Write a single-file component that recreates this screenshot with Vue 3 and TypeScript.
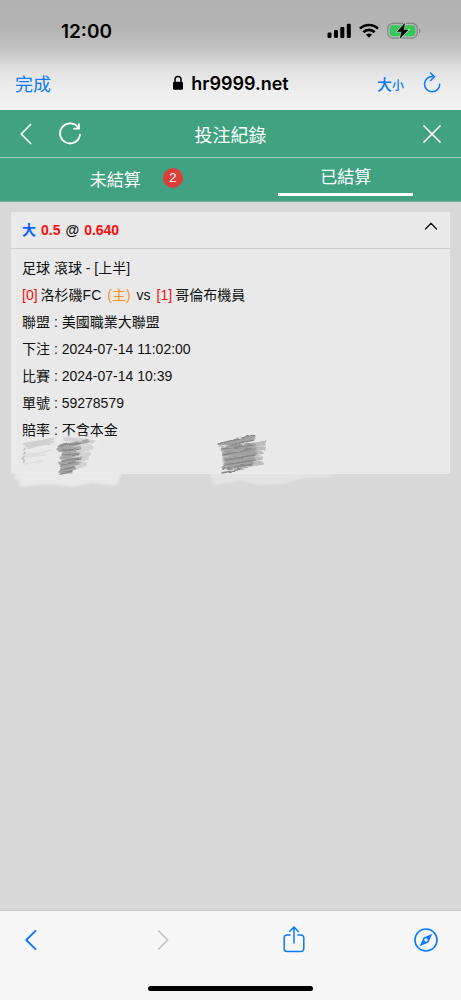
<script setup lang="ts">
import { ref } from 'vue'

interface Row {
  label: string
  value: string
}

const pending = 2
const activeTab = ref<'open' | 'settled'>('settled')
const expanded = ref(true)

const rows: Row[] = [
  { label: '聯盟', value: '美國職業大聯盟' },
  { label: '下注', value: '2024-07-14 11:02:00' },
  { label: '比賽', value: '2024-07-14 10:39' },
  { label: '單號', value: '59278579' },
  { label: '賠率', value: '不含本金' },
]
</script>

<template>
  <div class="screen">
    <header class="browser-top">
      <div class="status">
        <span class="clock">12:00</span>
        <div class="indicators">
          <svg width="24" height="16" viewBox="0 0 24 16" aria-hidden="true">
            <rect x="0.5" y="9.5" width="4" height="5.5" rx="1.2" />
            <rect x="7" y="7" width="4" height="8" rx="1.2" />
            <rect x="13.3" y="4" width="4" height="11" rx="1.2" />
            <rect x="19.8" y="0.7" width="4" height="14.3" rx="1.2" />
          </svg>
          <svg width="20" height="16" viewBox="0 0 20 16" aria-hidden="true">
            <g fill="none" stroke="#000" stroke-width="2.7">
              <path d="M1 5.6C6 .8 14 .8 19 5.6" />
              <path d="M4.4 9.2c3.2-3 8-3 11.2 0" />
            </g>
            <path d="M6.9 11.6c1.8-1.5 4.4-1.5 6.2 0L10 14.8z" />
          </svg>
          <svg width="34" height="18" viewBox="0 0 34 18" aria-hidden="true">
            <rect x="0.8" y="1.3" width="29.4" height="14.8" rx="5" fill="none" stroke="#858585" stroke-width="1.2" />
            <path d="M32 6.5v4.6c2-.7 2-3.9 0-4.6z" fill="#858585" />
            <rect x="2.7" y="3.2" width="25.6" height="11" rx="3.2" fill="#34c759" />
            <path d="M17.6 1.600L10.400 9.600h4.300L13.200 16.200l7.700-8.200h-4.400z" stroke="#b4d8bd" stroke-width="2" />
            <path d="M17.6 1.600L10.400 9.600h4.300L13.200 16.200l7.700-8.200h-4.400z" stroke="#000" stroke-width="0.6" />
          </svg>
        </div>
      </div>
      <div class="address">
        <button class="done">完成</button>
        <div class="site">
          <svg width="12" height="16" viewBox="0 0 12 16" aria-hidden="true">
            <rect x="1" y="6.8" width="10" height="8" rx="1.4" />
            <path d="M3 7V4.4C3 .6 9 .6 9 4.4V7" fill="none" stroke="#000" stroke-width="1.5" />
          </svg>
          <span>hr9999.net</span>
        </div>
        <div class="address-tools">
          <button class="text-size">大<small>小</small></button>
          <button aria-label="重新載入">
            <svg class="line" width="18" height="22" viewBox="0 0 18 22">
              <path d="M9.800 4.600A7.600 7.600 0 1 0 16.700 12.200" stroke-width="1.5" />
              <path d="M7.600 1l3.900 3.700-3.900 3.800" stroke-width="1.5" />
            </svg>
          </button>
        </div>
      </div>
    </header>

    <div class="title-bar">
      <div class="title-left">
        <button aria-label="返回">
          <svg class="line" width="12" height="22" viewBox="0 0 12 22"><path d="M10.600 1.500L1.200 11l9.400 9.500" stroke-width="1.7" /></svg>
        </button>
        <button aria-label="重新整理">
          <svg class="line" width="24" height="24" viewBox="0 0 24 24">
            <path d="M20.600 6.200A10 10 0 1 0 22 12.600" stroke-width="1.800" />
            <path d="M20.900 2.200v4.500h-4.700" stroke-width="1.800" />
          </svg>
        </button>
      </div>
      <h1>投注紀錄</h1>
      <button class="close" aria-label="關閉">
        <svg class="line" width="18" height="18" viewBox="0 0 18 18"><path d="M1 1l16 16M17 1L1 17" stroke-width="1.700" /></svg>
      </button>
    </div>

    <nav class="tabs">
      <button :class="{ active: activeTab === 'open' }" @click="activeTab = 'open'">
        <span class="tab-text">未結算<span class="badge">{{ pending }}</span></span>
      </button>
      <button :class="{ active: activeTab === 'settled' }" @click="activeTab = 'settled'">
        <span class="tab-text">已結算</span>
      </button>
    </nav>

    <main>
      <article class="bet">
        <button class="bet-head" :aria-expanded="expanded" @click="expanded = !expanded">
          <span class="odds">
            <b class="pick">大</b>
            <b class="red">0.5</b>
            <b>@</b>
            <b class="red">0.640</b>
          </span>
          <svg class="line" width="14" height="8" viewBox="0 0 14 8"><path d="M1.500 7L7 1.300 12.500 7" stroke-width="1.300" /></svg>
        </button>
        <div v-if="expanded" class="bet-body">
          <p>足球 滾球 - [上半]</p>
          <p class="match">
            <span class="team"><span class="red">[0]</span><span>洛杉磯FC</span></span>
            <span class="home">(主)</span>
            <span>vs</span>
            <span class="team"><span class="red">[1]</span><span>哥倫布機員</span></span>
          </p>
          <p v-for="row in rows" :key="row.label">{{ row.label }} : {{ row.value }}</p>
        </div>
        <svg v-if="expanded" class="marks" width="340" height="64" viewBox="0 0 340 64" aria-hidden="true">
          <defs>
            <filter id="smudge" x="-10%" y="-30%" width="120%" height="160%">
              <feGaussianBlur stdDeviation="1.3" />
            </filter>
            <filter id="pencil" x="-10%" y="-10%" width="120%" height="120%">
              <feTurbulence type="fractalNoise" baseFrequency="0.12 0.35" numOctaves="2" seed="4" result="grain" />
              <feDisplacementMap in="SourceGraphic" in2="grain" scale="3" xChannelSelector="R" yChannelSelector="G" />
              <feGaussianBlur stdDeviation="0.6" />
            </filter>
          </defs>
          <g fill="#ececec" filter="url(#smudge)">
            <path d="M4 42h107l-6 14-24-3-20 4-20-3-34 3 2-6-6-2z" opacity=".85" />
            <path d="M198 43h130l-12 4-28 2-14 5-28 1-14-4-30 4z" opacity=".55" />
            <path d="M54 5l36 2-4 7-32 1z" opacity=".75" />
          </g>
          <g fill="none" stroke-linecap="round" stroke-linejoin="round" filter="url(#pencil)">
            <path d="M13 14l29-5-27 7 27-4-26 6" stroke="#d0d0d0" stroke-width="2" />
            <path d="M14 25l26-4-25 6 20-2M14 34l18-3" stroke="#dedede" stroke-width="1.500" />
            <path d="M13 18v15M11 24h4M11 29h4" stroke="#aaa" stroke-width="1" stroke-dasharray="2 2" />
            <path d="M54 9l28 2-24 6-6 4 28-4-26 10 24-3-24 8 22-4-22 9 20-3-20 7" stroke="#d2d2d2" stroke-width="4" />
            <path d="M48 16l28-5-22 6-7 2 22-1-17 5 16 1-18 4 17 1-18 4 19 0-18 4 14 1-15 4 11 0" stroke="#a6a6a6" stroke-width="3" />
            <path d="M49 16l21-3M48 21l19-2M51 25l16-1M51 31l19-3M50 35l14-3M50 40l13-3M50 44l11-3" stroke="#888" stroke-width="1.500" />
            <path d="M211 19l42-6-40 9 40-4-40 8 38-3-38 7 37-2-35 7 35-2-33 5" stroke="#bbb" stroke-width="4" />
            <path d="M209 15l34-8-26 9 26-1-29 5 30-1-31 5 31-1-30 6 28-2-28 6 26-1-27 6 20-3" stroke="#a2a2a2" stroke-width="3.500" />
            <path d="M207 14l37-9M220 15l23-5M211 19l30-4M212 25l28-6M215 30l29-5M213 35l31-5M212 39l30-5M211 43l24-5" stroke="#888" stroke-width="1.400" />
          </g>
        </svg>
      </article>
    </main>

    <footer class="browser-bottom">
      <div class="toolbar">
        <button aria-label="上一頁">
          <svg class="line" width="12" height="22" viewBox="0 0 12 22"><path d="M10.500 1.800L1.300 11l9.200 9.200" stroke-width="1.900" /></svg>
        </button>
        <button aria-label="下一頁" disabled>
          <svg class="line" width="12" height="22" viewBox="0 0 12 22"><path d="M1.500 1.800l9.200 9.200-9.200 9.200" stroke-width="1.600" /></svg>
        </button>
        <button aria-label="分享">
          <svg class="line" width="22" height="28" viewBox="0 0 22 28">
            <path d="M7 9H4A2.800 2.800 0 0 0 1.200 11.800v11A2.800 2.800 0 0 0 4 25.600h14a2.800 2.800 0 0 0 2.800-2.800v-11A2.800 2.800 0 0 0 18 9h-3M11 17V1.300M6.600 5.500L11 1.100l4.400 4.400" stroke-width="1.500" />
          </svg>
        </button>
        <button aria-label="在瀏覽器中開啟">
          <svg width="24" height="24" viewBox="0 0 24 24">
            <circle cx="12" cy="12" r="11" fill="none" stroke="currentColor" stroke-width="1.600" />
            <path fill-rule="evenodd" fill="currentColor" d="M18.300 5.700L14.400 14.400 5.700 18.300 9.600 9.600zM12 10.300a1.700 1.700 0 1 0 0 3.400 1.700 1.700 0 0 0 0-3.400z" />
          </svg>
        </button>
      </div>
      <div class="home-bar"></div>
    </footer>
  </div>
</template>

<style>
body {
  margin: 0;
}
</style>

<style scoped>
.screen {
  display: flex;
  flex-direction: column;
  min-height: 100vh;
  background: #d8d8d8;
  color: #111;
  font-family: "Liberation Sans", "Noto Sans CJK TC", sans-serif;
}

button {
  display: flex;
  align-items: center;
  margin: 0;
  padding: 0;
  border: 0;
  background: none;
  color: inherit;
  font: inherit;
}

svg {
  display: block;
  flex: none;
}

.line {
  fill: none;
  stroke: currentColor;
  stroke-linecap: round;
  stroke-linejoin: round;
}

.browser-top {
  padding-bottom: 6px;
  background: linear-gradient(#b1b1b1 0, #b4b4b4 24%, #c0c0c0 42%, #e1e1e1 64%, #ededed 80%, #f3f3f3 100%);
  font-family: Inter, "Noto Sans CJK TC", sans-serif;
}

.status {
  display: flex;
  align-items: center;
  justify-content: space-between;
  height: 62px;
  padding: 0 40px 0 61px;
}

.clock {
  color: #000;
  font-size: 19px;
  font-weight: 600;
}

.indicators {
  display: flex;
  align-items: center;
  gap: 8px;
}

.address {
  display: grid;
  grid-template-columns: 1fr auto 1fr;
  align-items: center;
  height: 42px;
  padding: 0 15px;
  color: #0a7aff;
}

.done {
  font-size: 18px;
}

.site {
  display: flex;
  align-items: center;
  gap: 7px;
  color: #000;
  font-size: 18px;
  font-weight: 600;
}

.address-tools {
  display: flex;
  align-items: center;
  justify-content: flex-end;
  gap: 19px;
  padding-right: 5px;
}

.text-size {
  align-items: baseline;
  font-size: 15px;
  font-weight: 500;
}

.text-size small {
  font-size: 12px;
}

.title-bar {
  display: grid;
  grid-template-columns: 1fr auto 1fr;
  align-items: center;
  height: 47px;
  padding: 0 20px;
  border-bottom: 1px solid #a5cdbd;
  background: #40a280;
  color: #fff;
}

.title-left {
  display: flex;
  align-items: center;
  gap: 26px;
}

h1 {
  margin: 0;
  font-size: 18px;
  font-weight: 400;
}

.close {
  justify-self: end;
}

.tabs {
  display: grid;
  grid-template-columns: 1fr 1fr;
  height: 43px;
  border-bottom: 1px solid #7fb5a0;
  background: #40a280;
  color: #fff;
}

.tabs button {
  flex-direction: column;
  justify-content: flex-end;
  gap: 3px;
  padding-bottom: 8px;
  font-size: 17px;
  line-height: 24px;
}

.tabs .active {
  padding-bottom: 5px;
}

.tabs .active::after {
  width: 135px;
  height: 3px;
  background: #fff;
  content: "";
}

.tab-text {
  position: relative;
}

.badge {
  position: absolute;
  top: -1px;
  left: 100%;
  width: 20px;
  height: 20px;
  margin-left: 22px;
  border-radius: 50%;
  background: #dc3f3b;
  font-size: 13px;
  line-height: 20px;
  text-align: center;
}

main {
  flex: 1;
  padding: 10px 11px;
}

.bet {
  position: relative;
  background: #e9e9e9;
  font-size: 14px;
}

.bet-head {
  justify-content: space-between;
  width: 100%;
  height: 37px;
  padding: 0 12px 2px 11px;
  border-bottom: 1px solid #cecece;
  text-align: left;
}

.bet-head svg {
  margin-bottom: 6px;
}

.odds {
  display: flex;
  align-items: baseline;
  gap: 5px;
}

.pick {
  color: #0a60ff;
}

.red {
  color: #fb0d0d;
}

.home {
  color: #ff9320;
}

.bet-body {
  padding: 6px 11px 30px;
}

.bet-body p {
  margin: 0;
  line-height: 27px;
}

.match,
.team {
  display: flex;
  align-items: baseline;
}

.bet-body .match {
  gap: 6px;
}

.team {
  gap: 3px;
}

.marks {
  position: absolute;
  bottom: -20px;
  left: 0;
  max-width: 100%;
  pointer-events: none;
}

.browser-bottom {
  display: flex;
  flex-direction: column;
  align-items: center;
  border-top: 1px solid #c6c6c6;
  background: #f7f7f7;
}

.toolbar {
  display: flex;
  align-items: center;
  justify-content: space-between;
  box-sizing: border-box;
  width: 100%;
  height: 57px;
  padding: 0 23px 0 19px;
  color: #0a7aff;
}

.toolbar button {
  justify-content: center;
  width: 24px;
}

.toolbar button:disabled {
  color: #c2c2c2;
}

.home-bar {
  width: 165px;
  height: 5px;
  margin: 18px 0 9px;
  border-radius: 3px;
  background: #000;
}
</style>
